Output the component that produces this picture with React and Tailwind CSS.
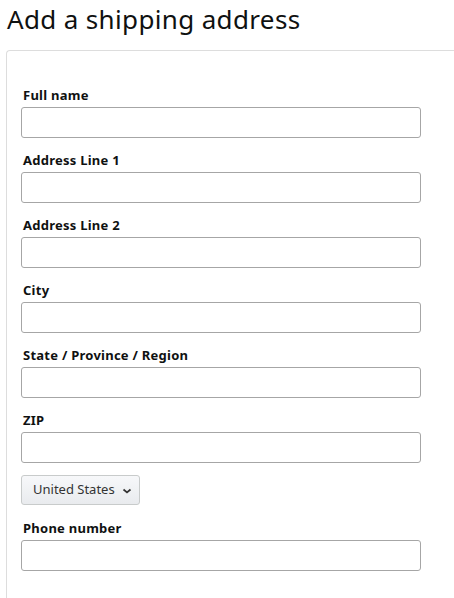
import React from "react";

const fields = [
  "Full name",
  "Address Line 1",
  "Address Line 2",
  "City",
  "State / Province / Region",
  "ZIP",
];

const Field = ({ label }) => (
  <div className="mb-[13px]">
    <label className="block text-[13px] leading-[19px] font-bold tracking-[0.25px] text-[#0f1111] pl-[2px] mb-[2px]">
      {label}
    </label>
    <input
      type="text"
      className="block w-[400px] h-[31px] rounded-[3px] border border-[#a6a6a6] bg-white outline-none"
    />
  </div>
);

export default function App() {
  return (
    <div className="w-[454px] h-[598px] overflow-hidden bg-white font-['Noto_Sans',sans-serif] text-[#0f1111]">
      <h1 className="pl-[7px] pt-[2px] text-[26px] leading-[35px] font-normal tracking-[0.35px]">
        Add a shipping address
      </h1>

      <div className="mt-[13px] ml-[6px] h-[600px] border-l border-t border-[#dddddd] rounded-tl-[4px] pt-[35px] pl-[14px]">
        {fields.map((f) => (
          <Field key={f} label={f} />
        ))}

        {/* country dropdown */}
        <button className="-mt-[1px] flex items-center gap-[7px] h-[30px] w-[119px] pl-[11px] rounded-[3px] border border-[#c8cbcb] bg-gradient-to-b from-[#f7f8fa] to-[#e9ebee] text-[13px] text-[#333333]">
          United States
          <svg width="10" height="8" viewBox="0 0 10 8" className="mt-[1px]">
            <path d="M1.5 2.5 L5 5.5 L8.5 2.5" fill="none" stroke="#333" strokeWidth="1.7" />
          </svg>
        </button>

        <div className="mt-[14px]">
          <Field label="Phone number" />
        </div>
      </div>
    </div>
  );
}
